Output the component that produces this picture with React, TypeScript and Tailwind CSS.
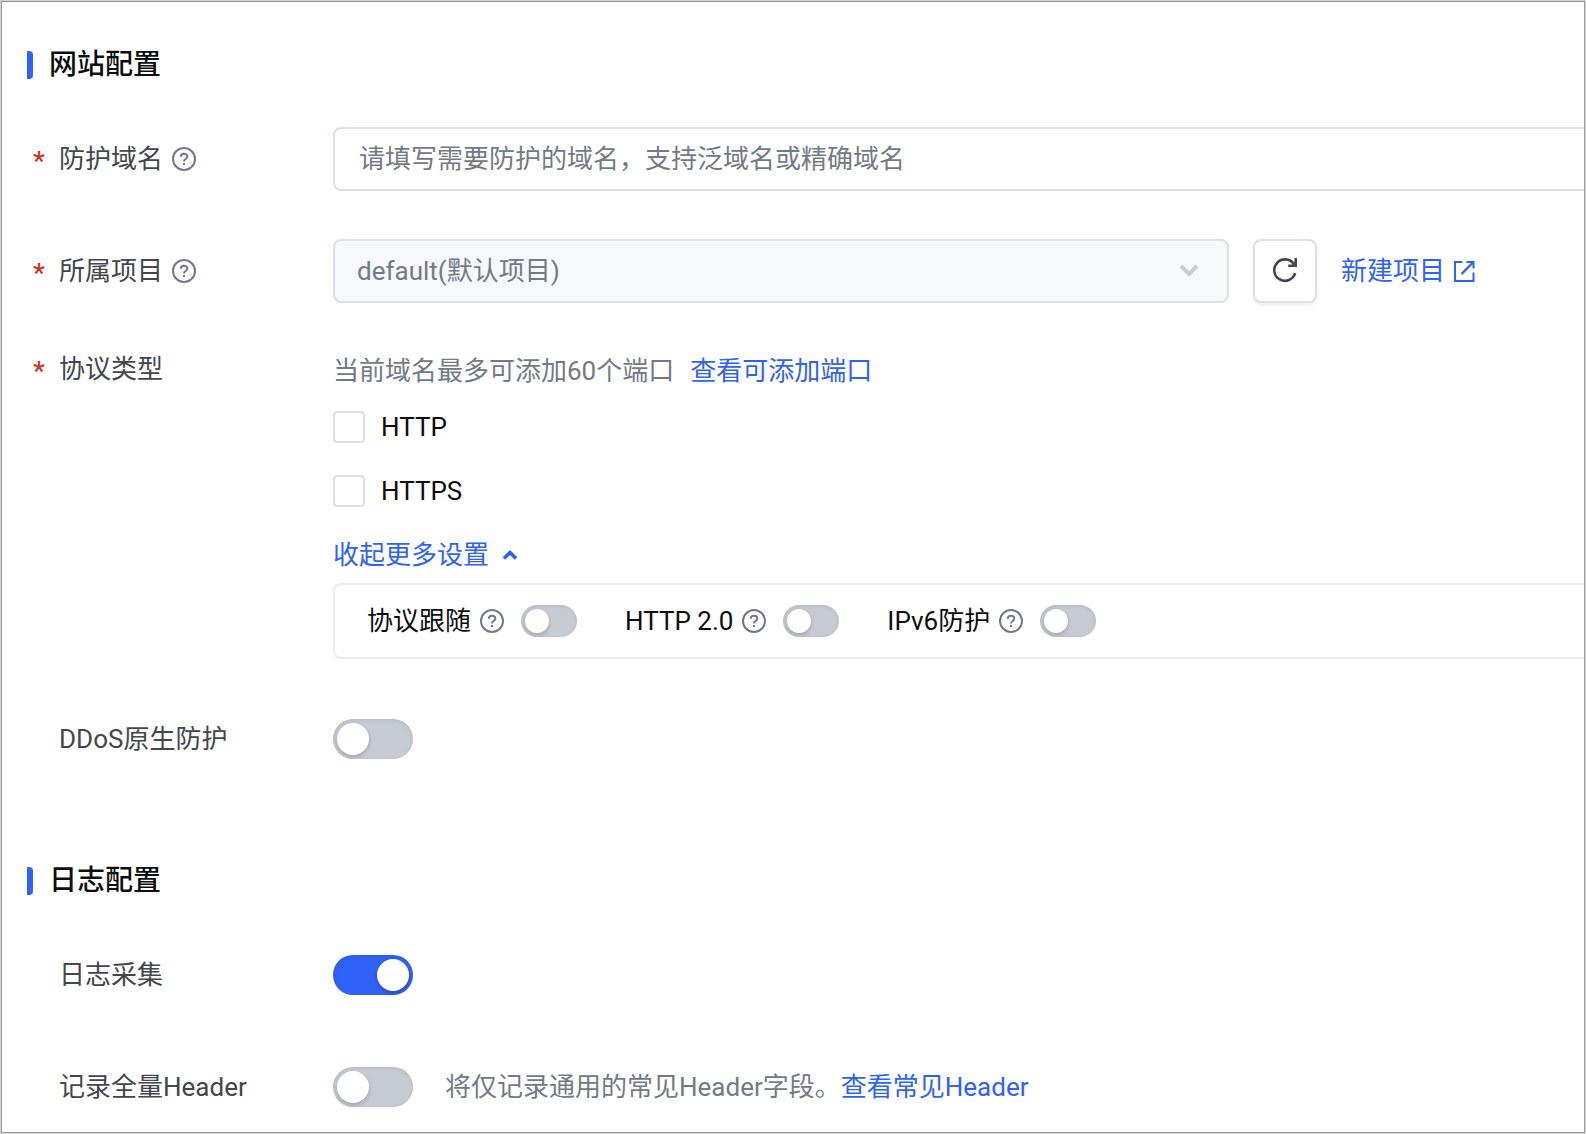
import React, { useId, useState } from "react";
import clsx from "clsx";

interface FormRowProps {
  label: string;
  htmlFor?: string;
  required?: boolean;
  help?: boolean;
  alignTop?: boolean;
  children: React.ReactNode;
}

interface SwitchProps {
  id?: string;
  size?: "small" | "large";
  defaultChecked?: boolean;
}

/**
 * Round question mark shown after labels that have a tooltip
 */
function HelpIcon() {
  return (
    <svg className="h-6 w-6 shrink-0 text-[#737a87]" viewBox="0 0 24 24" fill="none" aria-hidden="true">
      <circle cx="12" cy="12" r="11" stroke="currentColor" strokeWidth="2" />
      <path
        d="M8.8 9.8C8.8 7.8 10.2 6.8 12 6.8C13.9 6.8 15.3 7.9 15.3 9.5C15.3 10.9 14.4 11.4 13.5 12C12.5 12.6 12 13.1 12 14.5"
        stroke="currentColor"
        strokeWidth="2"
      />
      <rect x="11" y="16" width="2" height="2" fill="currentColor" />
    </svg>
  );
}

function RefreshIcon() {
  return (
    <svg className="h-6 w-6 overflow-visible" viewBox="0 1 24 24" fill="none" aria-hidden="true">
      <path
        d="M22.2 15.2A10.7 10.7 0 1 1 20.6 5.8"
        stroke="currentColor"
        strokeWidth="2.6"
      />
      <path d="M22.7 0V7.7H15.2" stroke="currentColor" strokeWidth="2.6" />
      <path d="M18.6 7.5L22.5 3.6V7.5Z" fill="currentColor" />
    </svg>
  );
}

function ExternalIcon() {
  return (
    <svg className="h-6 w-6" viewBox="0 0 24 24" fill="none" aria-hidden="true">
      <path d="M9.5 3H2V22H20.5V13.5" stroke="currentColor" strokeWidth="2" />
      <path d="M13.5 3H20.5V9.5" stroke="currentColor" strokeWidth="2" />
      <path d="M20.5 3L8.5 15" stroke="currentColor" strokeWidth="2.4" />
    </svg>
  );
}

function Switch({ id, size = "large", defaultChecked = false }: SwitchProps) {
  return (
    <input
      id={id}
      type="checkbox"
      role="switch"
      defaultChecked={defaultChecked}
      className={clsx(
        "inline-flex shrink-0 cursor-pointer appearance-none rounded-full bg-[#c7cbd4] p-1 shadow-[inset_0_1px_4px_rgba(0,0,0,0.1)] checked:justify-end checked:bg-[#2f62f7]",
        "before:rounded-full before:bg-white before:shadow-[0_2px_4px_rgba(0,0,0,0.2)] before:content-['']",
        size === "large" ? "h-10 w-20 before:size-8" : "h-8 w-14 before:size-6"
      )}
    />
  );
}

function SectionTitle({ children }: { children: React.ReactNode }) {
  return (
    <h2 className="flex items-center gap-4 text-[28px] leading-7 font-medium text-[#0c0d0e]">
      <span className="h-7 w-1.5 rounded-r-sm bg-[#2f62f7]" />
      {children}
    </h2>
  );
}

function FormRow({ label, htmlFor, required, help, alignTop, children }: FormRowProps) {
  return (
    <div className={clsx("flex", alignTop ? "items-start" : "min-h-16 items-center")}>
      <div className="flex w-[306px] shrink-0 items-center leading-9 text-[#42464e]">
        <span className="w-8 pt-1 pl-1.5 leading-7 font-bold text-[#cb3a2e]">{required && "*"}</span>
        <label htmlFor={htmlFor}>{label}</label>
        {help && (
          <span className="ml-[9px]">
            <HelpIcon />
          </span>
        )}
      </div>
      <div className="min-w-0 flex-1">{children}</div>
    </div>
  );
}

function ProtocolOption({ name }: { name: string }) {
  return (
    <label className="flex h-8 w-fit items-center gap-4 text-[#0c0d0e]">
      <input
        type="checkbox"
        className="size-8 appearance-none rounded-sm border-2 border-[#dde0e7] bg-white checked:bg-[#2f62f7]"
      />
      {name}
    </label>
  );
}

function AdvancedOption({ name }: { name: string }) {
  const id = useId();
  return (
    <div className="flex items-center">
      <label htmlFor={id}>{name}</label>
      <span className="mr-[17px] ml-[9px]">
        <HelpIcon />
      </span>
      <Switch id={id} size="small" />
    </div>
  );
}

const protocols = ["HTTP", "HTTPS"];
const advancedOptions = ["协议跟随", "HTTP 2.0", "IPv6防护"];

export default function App() {
  const [expanded, setExpanded] = useState(true);

  return (
    <div className="min-h-screen border border-[#d2d2d2] bg-white font-['Roboto','Noto_Sans_CJK_SC',sans-serif] text-[26px] leading-10">
      <main className="flex min-h-[calc(100vh-2px)] flex-col gap-24 border border-[#9c9c9c] pt-[49px] pb-3 pl-[25px]">
        {/* Website settings */}
        <section className="flex flex-col gap-12">
          <SectionTitle>网站配置</SectionTitle>

          <FormRow label="防护域名" htmlFor="domain" required help>
            <input
              id="domain"
              type="text"
              placeholder="请填写需要防护的域名，支持泛域名或精确域名"
              className="h-16 w-full rounded-l-lg border-2 border-r-0 border-[#dde0e7] px-6 text-[#0c0d0e] outline-none placeholder:text-[#737a87]"
            />
          </FormRow>

          <FormRow label="所属项目" htmlFor="project" required help>
            <div className="flex items-center gap-6">
              <div className="grid w-[896px] items-center">
                <select
                  id="project"
                  disabled
                  className="col-start-1 row-start-1 h-16 w-full appearance-none rounded-lg border-2 border-[#dde0e7] bg-[#f6f8fa] px-[22px] text-[#737a87] opacity-100"
                >
                  <option>default(默认项目)</option>
                </select>
                <svg
                  className="pointer-events-none col-start-1 row-start-1 mr-[30px] h-5 w-5 justify-self-end text-[#c7cbd4]"
                  viewBox="0 0 20 20"
                  fill="none"
                  aria-hidden="true"
                >
                  <path d="M2 5L10 13L18 5" stroke="currentColor" strokeWidth="4" />
                </svg>
              </div>
              <button
                type="button"
                aria-label="刷新"
                className="flex size-16 shrink-0 items-center justify-center rounded-lg border-2 border-[#dde0e7] bg-white text-[#42464e] shadow-[0_2px_3px_rgba(0,0,0,0.08)]"
              >
                <RefreshIcon />
              </button>
              <a href="#new-project" className="flex shrink-0 items-center gap-2 text-[#2f62f7]">
                新建项目
                <ExternalIcon />
              </a>
            </div>
          </FormRow>

          <FormRow label="协议类型" required alignTop>
            <p className="text-[#737a87]">
              当前域名最多可添加60个端口
              <a href="#ports" className="ml-4 text-[#2f62f7]">
                查看可添加端口
              </a>
            </p>
            <div className="mt-5 flex flex-col gap-8">
              {protocols.map((name) => (
                <ProtocolOption key={name} name={name} />
              ))}
            </div>
            <button
              type="button"
              aria-expanded={expanded}
              onClick={() => setExpanded(!expanded)}
              className="mt-7 flex items-center gap-3 text-[#2f62f7]"
            >
              收起更多设置
              <svg className={clsx("h-5 w-5", !expanded && "rotate-180")} viewBox="0 0 20 20" fill="none" aria-hidden="true">
                <path d="M3 13.5L9 7.5L15 13.5" stroke="currentColor" strokeWidth="3.6" />
              </svg>
            </button>
            {expanded && (
              <div className="mt-2 flex h-[76px] items-center gap-12 rounded-l-lg border-2 border-r-0 border-[#ebecf1] px-8 text-[#0c0d0e]">
                {advancedOptions.map((name) => (
                  <AdvancedOption key={name} name={name} />
                ))}
              </div>
            )}
          </FormRow>

          <FormRow label="DDoS原生防护" htmlFor="ddos">
            <div className="flex">
              <Switch id="ddos" />
            </div>
          </FormRow>
        </section>

        {/* Log settings */}
        <section className="flex flex-col gap-12">
          <SectionTitle>日志配置</SectionTitle>

          <FormRow label="日志采集" htmlFor="log">
            <div className="flex">
              <Switch id="log" defaultChecked />
            </div>
          </FormRow>

          <FormRow label="记录全量Header" htmlFor="header">
            <div className="flex items-center gap-8">
              <Switch id="header" />
              <p className="text-[#737a87]">
                将仅记录通用的常见Header字段。
                <a href="#headers" className="text-[#2f62f7]">
                  查看常见Header
                </a>
              </p>
            </div>
          </FormRow>
        </section>
      </main>
    </div>
  );
}
